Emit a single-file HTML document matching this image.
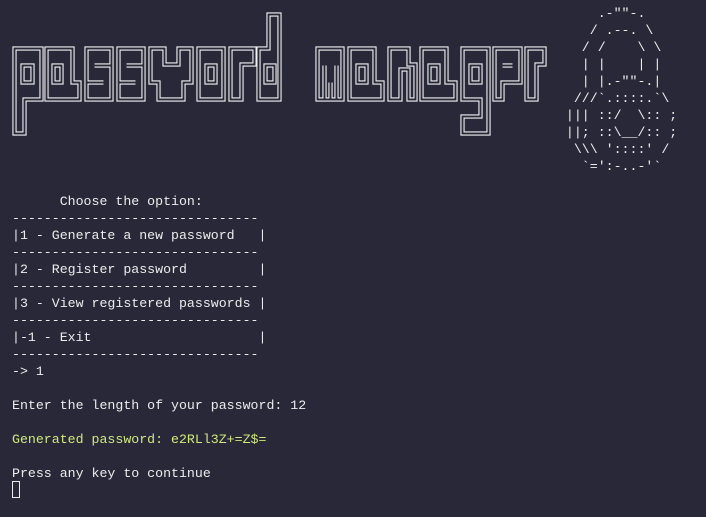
<!DOCTYPE html>
<html><head><meta charset="utf-8"><style>
html,body{margin:0;padding:0;background:#292838;width:706px;height:517px;overflow:hidden}
pre{margin:0;font-family:"Liberation Mono","DejaVu Sans Mono",monospace;font-size:13.25px;line-height:17px;color:#ececec;position:absolute;white-space:pre}
.g{color:#cfe97c}
#cur{position:absolute;left:12px;top:481px;width:6px;height:15px;border:1px solid #ececec}
svg{position:absolute;left:0;top:0}
</style></head><body>
<svg width="706" height="180" viewBox="0 0 706 180">
<defs>
<path id="t" d="
M14.5,48.5H41.5V99.5H24.5V133.5H14.5Z M22.5,65.5H32.5V82.5H22.5Z
M46.5,48.5H72.5V82.5H79.5V99.5H46.5Z M53.5,65.5H61.5V82.5H53.5Z
M86.5,48.5H111.5V99.5H86.5Z M94.5,65.5H111.5 M86.5,82.5H103.5
M118.5,48.5H143.5V99.5H118.5Z M126.5,65.5H143.5 M118.5,82.5H135.5
M150.5,48.5H164.5V64.5H178.5V48.5H191.5V82.5H183.5V99.5H158.5V82.5H150.5Z
M198.5,48.5H223.5V99.5H198.5Z M206.5,65.5H215.5V82.5H206.5Z
M230.5,48.5H254.5V64.5H241.5V99.5H230.5Z
M258.5,48.5H268.5V14.5H279.5V99.5H258.5Z M265.5,65.5H274.5V82.5H265.5Z
M317.5,48.5H342.5V99.5H317.5Z M324.5,65.5V99.5 M330.5,82.5V99.5 M336.5,65.5V99.5
M349.5,48.5H374.5V82.5H382.5V99.5H349.5Z M357.5,65.5H366.5V82.5H357.5Z
M389.5,48.5H408.5V64.5H415.5V99.5H408.5V69.5H400.5V99.5H389.5Z
M421.5,48.5H446.5V82.5H455.5V99.5H421.5Z M429.5,65.5H438.5V82.5H429.5Z
M462.5,48.5H488.5V133.5H462.5V116.5H480.5V99.5H462.5Z M470.5,65.5H480.5V82.5H470.5Z
M494.5,48.5H520.5V82.5H502.5V99.5H494.5Z M502.5,65.5H512.5
M526.5,48.5H544.5V64.5H536.5V99.5H526.5Z"/>
</defs>
<use href="#t" fill="none" stroke="#f2f2f2" stroke-width="4.2"/>
<use href="#t" fill="none" stroke="#292838" stroke-width="2"/>
</svg>
<pre style="left:550px;top:5px">      .-""-.
     / .--. \
    / /    \ \
    | |    | |
    | |.-""-.|
   ///`.::::.`\
  ||| ::/  \:: ;
  ||; ::\__/:: ;
   \\\ '::::' /
    `=':-..-'`</pre>
<pre style="left:12px;top:193px">      Choose the option:
-------------------------------
|1 - Generate a new password   |
-------------------------------
|2 - Register password         |
-------------------------------
|3 - View registered passwords |
-------------------------------
|-1 - Exit                     |
-------------------------------
-> 1

Enter the length of your password: 12

<span class="g">Generated password: e2RLl3Z+=Z$=</span>

Press any key to continue</pre>
<div id="cur"></div>
</body></html>
